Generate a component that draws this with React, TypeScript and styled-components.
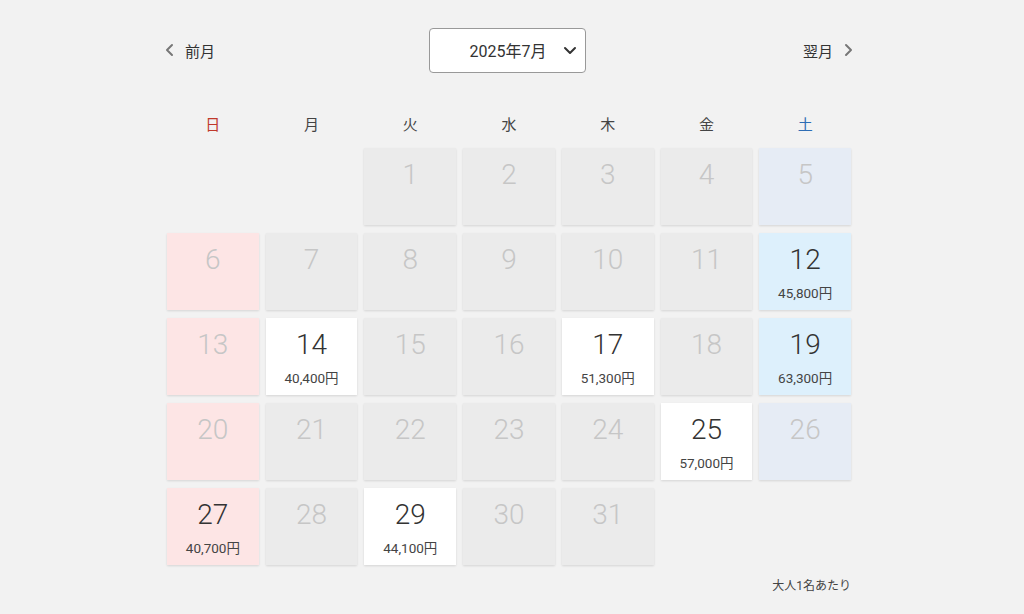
import styled, { createGlobalStyle } from 'styled-components';

const GlobalStyle = createGlobalStyle`
  body {
    margin: 0;
    background: #f2f2f2;
    font-family: Roboto, "Noto Sans CJK JP", sans-serif;
    color: #333;
  }
`;

const Page = styled.div`
  width: 684px;
  margin: 0 auto;
  padding-top: 27px;
  transform: translateX(-3px);
`;

const Nav = styled.div`
  display: flex;
  align-items: center;
  justify-content: space-between;
  height: 46px;
`;

const NavLink = styled.div`
  display: flex;
  align-items: center;
  gap: 8px;
  font-size: 15px;
  color: #333;
  margin-left: -4px;
  margin-right: -4px;
`;

const Select = styled.div`
  width: 157px;
  height: 45px;
  box-sizing: border-box;
  border: 1px solid #999;
  border-radius: 4px;
  background: #fff;
  display: flex;
  align-items: center;
  justify-content: flex-end;
  gap: 16px;
  padding-right: 8px;
  font-size: 16px;
  margin-left: -4px;
`;

const WeekRow = styled.div`
  display: grid;
  grid-template-columns: repeat(7, 1fr);
  gap: 7px;
  margin-top: 35px;
  height: 30px;
  align-items: center;
`;

const WeekDay = styled.div<{ $color: string }>`
  text-align: center;
  font-size: 15px;
  color: ${(p) => p.$color};
`;

const Grid = styled.div`
  display: grid;
  grid-template-columns: repeat(7, 1fr);
  grid-auto-rows: 77px;
  gap: 8px 7px;
  margin-top: 10px;
`;

type Kind = 'off' | 'sun' | 'sat' | 'open' | 'satOpen' | 'empty';

const bg: Record<Kind, string> = {
  off: '#ebebeb',
  sun: '#fde5e5',
  sat: '#e6ecf5',
  open: '#ffffff',
  satOpen: '#ddf0fc',
  empty: 'transparent',
};

const Cell = styled.div<{ $kind: Kind; $priced: boolean }>`
  background: ${(p) => bg[p.$kind]};
  box-shadow: ${(p) => (p.$kind === 'empty' ? 'none' : '0 1px 2px rgba(0,0,0,0.12)')};
  display: flex;
  flex-direction: column;
  align-items: center;
  padding-top: 10px;
  box-sizing: border-box;
  color: ${(p) => (p.$priced ? '#333' : '#c6c6c6')};
`;

const Num = styled.div`
  font-size: 28px;
  font-weight: 300;
  line-height: 34px;
`;

const Price = styled.div`
  font-size: 13.5px;
  margin-top: 5px;
  color: #444;
`;

const Note = styled.div`
  text-align: right;
  font-size: 12px;
  color: #444;
  margin-top: 11px;
`;

const Chevron = ({ dir }: { dir: 'l' | 'r' | 'd' }) => (
  <svg width="14" height="14" viewBox="0 0 14 14" fill="none" stroke={dir === 'd' ? '#333' : '#777'} strokeWidth="2" strokeLinecap="round" strokeLinejoin="round">
    {dir === 'l' && <path d="M9 2 L4 7 L9 12" />}
    {dir === 'r' && <path d="M5 2 L10 7 L5 12" />}
    {dir === 'd' && <path d="M2 5 L7 10 L12 5" />}
  </svg>
);

const prices: Record<number, string> = {
  12: '45,800円',
  14: '40,400円',
  17: '51,300円',
  19: '63,300円',
  25: '57,000円',
  27: '40,700円',
  29: '44,100円',
};

const weekdays = [
  { l: '日', c: '#c0392b' },
  { l: '月', c: '#444' },
  { l: '火', c: '#444' },
  { l: '水', c: '#444' },
  { l: '木', c: '#444' },
  { l: '金', c: '#444' },
  { l: '土', c: '#2e6db4' },
];

export default function App() {
  const cells: { day: number | null; col: number }[] = [];
  for (let i = 0; i < 2; i++) cells.push({ day: null, col: i });
  for (let d = 1; d <= 31; d++) cells.push({ day: d, col: (d + 1) % 7 });

  return (
    <>
      <GlobalStyle />
      <Page>
        <Nav>
          <NavLink>
            <Chevron dir="l" />
            前月
          </NavLink>
          <Select>
            2025年7月
            <Chevron dir="d" />
          </Select>
          <NavLink>
            翌月
            <Chevron dir="r" />
          </NavLink>
        </Nav>
        <WeekRow>
          {weekdays.map((w) => (
            <WeekDay key={w.l} $color={w.c}>
              {w.l}
            </WeekDay>
          ))}
        </WeekRow>
        <Grid>
          {cells.map((c, i) => {
            if (c.day === null) return <Cell key={i} $kind="empty" $priced={false} />;
            const price = prices[c.day];
            let kind: Kind = 'off';
            if (c.col === 0) kind = 'sun';
            else if (c.col === 6) kind = price ? 'satOpen' : 'sat';
            else if (price) kind = 'open';
            return (
              <Cell key={i} $kind={kind} $priced={!!price}>
                <Num>{c.day}</Num>
                {price && <Price>{price}</Price>}
              </Cell>
            );
          })}
        </Grid>
        <Note>大人1名あたり</Note>
      </Page>
    </>
  );
}
